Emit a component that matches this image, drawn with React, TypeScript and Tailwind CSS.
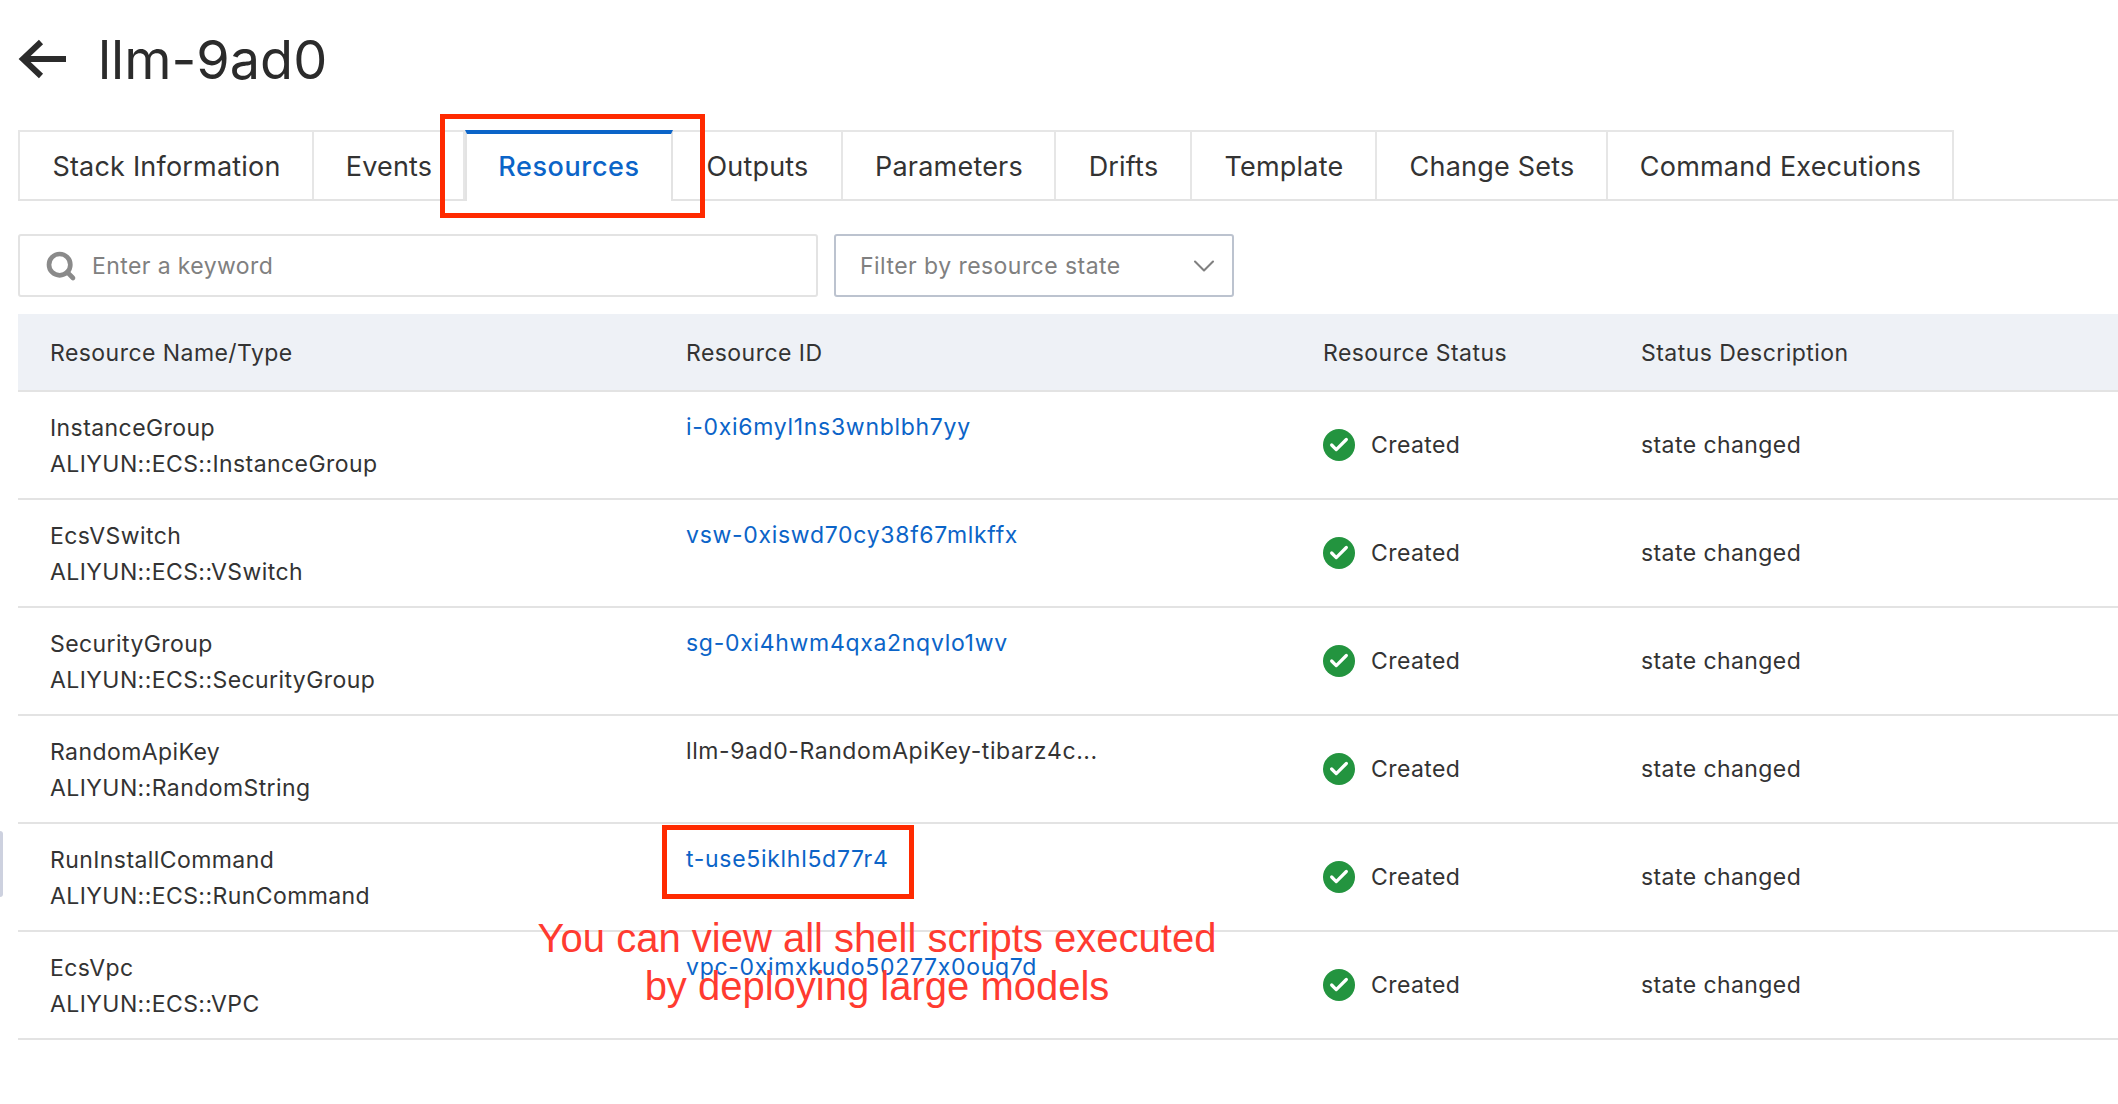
import { Check, ChevronDown, Search } from "lucide-react";

const TABS = [
  { label: "Stack Information", width: "w-[296px]" },
  { label: "Events", width: "w-[151px]" },
  { label: "Resources", width: "w-[208px]", active: true },
  { label: "Outputs", width: "w-[170px]" },
  { label: "Parameters", width: "w-[213px]" },
  { label: "Drifts", width: "w-[136px]" },
  { label: "Template", width: "w-[185px]" },
  { label: "Change Sets", width: "w-[231px]" },
  { label: "Command Executions", width: "w-[346px]" },
];

const ROWS = [
  { name: "InstanceGroup", type: "ALIYUN::ECS::InstanceGroup", id: "i-0xi6myl1ns3wnblbh7yy", link: true },
  { name: "EcsVSwitch", type: "ALIYUN::ECS::VSwitch", id: "vsw-0xiswd70cy38f67mlkffx", link: true },
  { name: "SecurityGroup", type: "ALIYUN::ECS::SecurityGroup", id: "sg-0xi4hwm4qxa2nqvlo1wv", link: true },
  { name: "RandomApiKey", type: "ALIYUN::RandomString", id: "llm-9ad0-RandomApiKey-tibarz4c...", link: false },
  { name: "RunInstallCommand", type: "ALIYUN::ECS::RunCommand", id: "t-use5iklhl5d77r4", link: true },
  { name: "EcsVpc", type: "ALIYUN::ECS::VPC", id: "vpc-0ximxkudo50277x0ouq7d", link: true },
];

const GRID = "grid grid-cols-[636px_637px_318px_1fr]";

export default function App() {
  return (
    <div className="relative h-[1104px] w-[2118px] overflow-hidden bg-white text-[#333] font-['Inter',sans-serif]">
      <header className="flex h-[130px] items-center pb-[12px] pl-[18px] text-[#2b2b2b]">
        <svg viewBox="0 0 50 40" className="h-[40px] w-[50px]" fill="none" stroke="currentColor" strokeWidth="6">
          <path d="M48 20H5" />
          <path d="M23 3 5 20l18 17" />
        </svg>
        <h1 className="ml-[30px] pt-[2px] text-[54px] font-normal leading-none">llm-9ad0</h1>
      </header>

      <nav className="ml-[18px] flex h-[71px] border-b-2 border-[#e3e3e3]">
        {TABS.map((tab) =>
          tab.active ? (
            <div
              key={tab.label}
              className={`${tab.width} -mb-[2px] flex h-[71px] items-center justify-center border-x-2 border-t-[4px] border-[#e3e3e3] border-t-[#0b64c8] bg-white text-[27px] font-medium tracking-[0.6px] text-[#0b64c8]`}
            >
              {tab.label}
            </div>
          ) : (
            <div
              key={tab.label}
              className={`${tab.width} flex items-center justify-center border-r-2 border-t-2 border-[#e6e6e6] pl-[1px] pt-[4px] text-[27px] tracking-[0.2px] first:border-l-2`}
            >
              {tab.label}
            </div>
          ),
        )}
      </nav>

      <div className="ml-[18px] mt-[33px] flex gap-[16px]">
        <div className="flex h-[63px] w-[800px] items-center rounded-[3px] border-2 border-[#e3e3e3] pl-[25px] text-[23px] tracking-[0.4px] text-[#808080]">
          <Search className="h-[32px] w-[32px] text-[#8a8a8a]" strokeWidth={3.5} />
          <span className="ml-[15px] pt-[2px]">Enter a keyword</span>
        </div>
        <div className="flex h-[63px] w-[400px] items-center justify-between rounded-[3px] border-2 border-[#bcc3cf] pl-[24px] pr-[10px] text-[23px] tracking-[0.45px] text-[#808080]">
          <span className="pt-[2px]">Filter by resource state</span>
          <ChevronDown className="h-[36px] w-[36px] text-[#808080]" strokeWidth={1.4} />
        </div>
      </div>

      <section className="ml-[18px] mt-[17px]">
        <div className={`${GRID} h-[78px] items-center border-b-2 border-[#e3e3e3] bg-[#eef1f6] pl-[32px] pt-[2px] text-[23px] tracking-[0.45px]`}>
          <div>Resource Name/Type</div>
          <div>Resource ID</div>
          <div>Resource Status</div>
          <div>Status Description</div>
        </div>

        {ROWS.map((row) => (
          <div key={row.name} className={`${GRID} h-[108px] items-center border-b-2 border-[#e3e3e3] pl-[32px] text-[23px] tracking-[0.42px]`}>
            <div className="pt-[2px] leading-[36px]">
              <div>{row.name}</div>
              <div>{row.type}</div>
            </div>
            <div className={`self-start pt-[17px] leading-[36px] ${row.link ? "tracking-[0.7px] text-[#0b64c8]" : "tracking-[0.58px]"}`}>{row.id}</div>
            <div className="flex items-center gap-[16px]">
              <span className="flex h-[32px] w-[32px] items-center justify-center rounded-full bg-[#23943f]">
                <Check className="h-[22px] w-[22px] text-white" strokeWidth={3.5} />
              </span>
              <span className="pt-[1px]">Created</span>
            </div>
            <div className="pt-[1px]">state changed</div>
          </div>
        ))}
      </section>

      {/* annotations pasted over the screenshot */}
      <div className="absolute left-[440px] top-[114px] h-[104px] w-[265px] border-[5px] border-[#ff2a00]" />
      <div className="absolute left-[662px] top-[825px] h-[74px] w-[252px] border-[5px] border-[#ff2a00]" />
      <div className="absolute left-[420px] top-[914px] w-[914px] text-center font-['Liberation_Sans',sans-serif] text-[40px] leading-[48px] text-[#ff3b30]">
        You can view all shell scripts executed
        <br />
        by deploying large models
      </div>
      <div className="absolute left-0 top-[831px] h-[66px] w-[3px] rounded-r-[3px] bg-[#cdd1df]" />
    </div>
  );
}
